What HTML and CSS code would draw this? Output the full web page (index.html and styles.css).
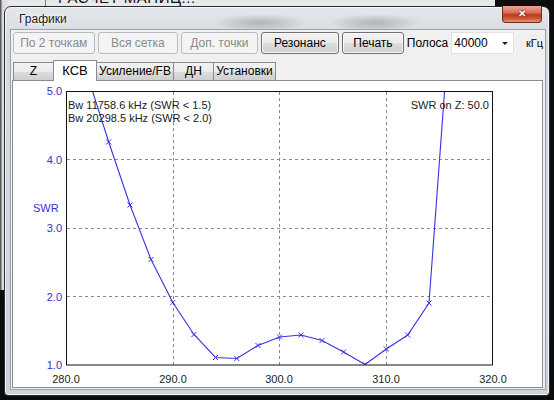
FILE: index.html
```html
<!DOCTYPE html>
<html lang="ru">
<head>
<meta charset="utf-8">
<title>Графики</title>
<link rel="stylesheet" href="styles.css">
</head>
<body>
<div class="desktop">
  <div class="bgwin">
    <span class="bgwin-cell"></span>
    <span class="bgwin-title">РАСЧЕТ МАНИЦ...</span>
  </div>

  <div class="window">
    <div class="titlebar">
      <span class="title">Графики</span>
      <span class="close">✕</span>
    </div>
    <div class="client">
      <div class="toolbar">
        <button class="btn w1" disabled>По 2 точкам</button>
        <button class="btn w2" disabled>Вся сетка</button>
        <button class="btn w3" disabled>Доп. точки</button>
        <button class="btn w4">Резонанс</button>
        <button class="btn w5">Печать</button>
        <span class="label">Полоса</span>
        <span class="combo"><span class="combo-val">40000</span><span class="combo-arrow"></span></span>
        <span class="unit">кГц</span>
      </div>
      <div class="tabs">
        <span class="tab t1">Z</span>
        <span class="tab t2 active">КСВ</span>
        <span class="tab t3">Усиление/FB</span>
        <span class="tab t4">ДН</span>
        <span class="tab t5">Установки</span>
      </div>
      <div class="panel">
        <svg class="chart" viewBox="12 79 530 309" width="530" height="309" xmlns="http://www.w3.org/2000/svg">
          <defs>
            <clipPath id="plotclip"><rect x="65" y="89" width="427" height="274"/></clipPath>
          </defs>
          <g class="grid">
            <line x1="172.5" y1="90" x2="172.5" y2="363"/>
            <line x1="278.5" y1="90" x2="278.5" y2="363"/>
            <line x1="385.5" y1="90" x2="385.5" y2="363"/>
            <line x1="66" y1="157.5" x2="492" y2="157.5"/>
            <line x1="66" y1="226.5" x2="492" y2="226.5"/>
            <line x1="66" y1="294.5" x2="492" y2="294.5"/>
          </g>
          <g clip-path="url(#plotclip)">
            <polyline class="curve" points="86.4,73 107.7,140 129,203 150,257.5 171.8,300.5 193,332.5 214.5,355.5 235.8,356.5 257,343.5 278.5,335 299.9,333 321,338.5 342.6,350 364,362.5 385.3,347 406.7,333 428,301 449.4,10"/>
            <path class="marks" d="M105.2,137.5l5,5m0,-5l-5,5 M126.5,200.5l5,5m0,-5l-5,5 M147.5,255l5,5m0,-5l-5,5 M169.3,298l5,5m0,-5l-5,5 M190.5,330l5,5m0,-5l-5,5 M212,353l5,5m0,-5l-5,5 M233.3,354l5,5m0,-5l-5,5 M254.5,341l5,5m0,-5l-5,5 M276,332.5l5,5m0,-5l-5,5 M297.4,330.5l5,5m0,-5l-5,5 M318.5,336l5,5m0,-5l-5,5 M340.1,347.5l5,5m0,-5l-5,5 M361.5,360l5,5m0,-5l-5,5 M382.8,344.5l5,5m0,-5l-5,5 M404.2,330.5l5,5m0,-5l-5,5 M425.5,298.5l5,5m0,-5l-5,5"/>
          </g>
          <rect class="frame" x="65.5" y="89.5" width="426" height="273.5"/>
          <g class="ylab">
            <text x="61" y="93">5.0</text>
            <text x="61" y="161.5">4.0</text>
            <text x="61" y="230">3.0</text>
            <text x="61" y="298.5">2.0</text>
            <text x="61" y="367">1.0</text>
          </g>
          <text class="yname" x="32" y="209.5">SWR</text>
          <g class="xlab">
            <text x="65" y="381">280.0</text>
            <text x="172" y="381">290.0</text>
            <text x="278" y="381">300.0</text>
            <text x="385" y="381">310.0</text>
            <text x="492" y="381">320.0</text>
          </g>
          <text class="info" x="67" y="107">Bw 11758.6 kHz (SWR &lt; 1.5)</text>
          <text class="info" x="67" y="119.5">Bw 20298.5 kHz (SWR &lt; 2.0)</text>
          <text class="info end" x="488" y="107">SWR on Z: 50.0</text>
        </svg>
      </div>
    </div>
  </div>
</div>
</body>
</html>
```

FILE: styles.css
```css
html, body {
  margin: 0;
  padding: 0;
}
body {
  width: 554px;
  height: 400px;
  overflow: hidden;
  background: #0c0c0c;
  font-family: "Liberation Sans", Arial, sans-serif;
}
.desktop {
  position: relative;
  width: 554px;
  height: 400px;
  overflow: hidden;
}
.bgwin {
  position: absolute;
  left: -10px;
  top: -20px;
  width: 505px;
  height: 310px;
  background: linear-gradient(90deg, #5a5a5a 0px, #5a5a5a 11px, #d9d9d9 12px, #e9e9e9 20px);
}
.bgwin-cell {
  position: absolute;
  left: 55px;
  top: 0;
  width: 1px;
  height: 40px;
  background: #7a7a7a;
}
.bgwin-title {
  position: absolute;
  left: 68px;
  top: 9px;
  font-size: 15px;
  color: #111;
  letter-spacing: 0.5px;
}
.window {
  position: absolute;
  left: 4px;
  top: 6px;
  width: 546px;
  height: 390px;
  box-sizing: border-box;
  border: 1px solid #2a2e33;
  border-radius: 7px 7px 4px 4px;
  background:
    radial-gradient(ellipse 48px 9px at 255px 16px, rgba(120,126,134,0.45), rgba(120,126,134,0) 100%),
    radial-gradient(ellipse 46px 9px at 370px 16px, rgba(120,126,134,0.45), rgba(120,126,134,0) 100%),
    linear-gradient(180deg, #e4e7ea 0%, #d6dbe0 8%, #cdd3d9 100%);
  box-shadow: inset 0 0 0 1px rgba(255,255,255,0.7);
  padding: 0 3px 5px 5px;
  display: flex;
  flex-direction: column;
}
.titlebar {
  position: relative;
  height: 22px;
  flex: none;
}
.title {
  position: absolute;
  left: 9px;
  top: 5px;
  font-size: 12px;
  color: #1c1c1c;
  text-shadow: 0 0 6px #fff, 0 0 3px #fff;
}
.close {
  position: absolute;
  right: 4px;
  top: -1px;
  width: 40px;
  height: 17px;
  box-sizing: border-box;
  border: 1px solid #6a2a20;
  border-top: none;
  border-radius: 0 0 4px 4px;
  background: linear-gradient(180deg, #e9a593 0%, #d8735d 40%, #c23a1f 55%, #cc5a3c 80%, #e39b7c 100%);
  color: #fff;
  font-size: 10px;
  font-weight: bold;
  line-height: 16px;
  text-align: center;
  text-shadow: 0 0 2px #5a1a10, 0 0 1px #5a1a10;
}
.client {
  flex: 1;
  background: #f0f0f0;
  border: 1px solid #9aa3ad;
  display: flex;
  flex-direction: column;
  padding: 2px 2px 1px 1px;
  min-height: 0;
}
.toolbar {
  display: flex;
  align-items: center;
  height: 22px;
  padding-left: 1px;
  flex: none;
}
.btn {
  height: 22px;
  box-sizing: border-box;
  margin-right: 3px;
  padding: 0;
  font-family: "Liberation Sans", Arial, sans-serif;
  font-size: 12px;
  color: #000;
  border: 1px solid #707070;
  border-radius: 3px;
  background: linear-gradient(180deg, #f2f2f2 0%, #ebebeb 50%, #dddddd 51%, #cfcfcf 100%);
  box-shadow: inset 0 0 0 1px rgba(255,255,255,0.8);
}
.btn:disabled {
  color: #8a8a8a;
  border-color: #b7bbbf;
  background: #f4f4f4;
  box-shadow: none;
}
.w1 { width: 82px; }
.w2 { width: 81px; }
.w3 { width: 77px; }
.w4 { width: 79px; }
.w5 { width: 62px; margin-right: 3px; }
.label {
  font-size: 12px;
  color: #000;
  margin-right: 3px;
}
.combo {
  position: relative;
  width: 63px;
  height: 22px;
  box-sizing: border-box;
  background: #fff;
  border: 1px solid #e2e2e2;
  display: flex;
  align-items: center;
}
.combo-val {
  font-size: 12px;
  padding-left: 2px;
  color: #000;
}
.combo-arrow {
  position: absolute;
  right: 5px;
  top: 9px;
  border-left: 3px solid transparent;
  border-right: 3px solid transparent;
  border-top: 3px solid #222;
}
.unit {
  font-size: 11px;
  margin-left: 12px;
  color: #000;
}
.tabs {
  display: flex;
  align-items: flex-end;
  height: 21px;
  margin-top: 5px;
  padding-left: 1px;
  flex: none;
  position: relative;
  z-index: 1;
}
.tab {
  height: 18px;
  box-sizing: border-box;
  border: 1px solid #898c95;
  border-bottom: none;
  margin-right: -1px;
  background: linear-gradient(180deg, #f2f2f2 0%, #ebebeb 50%, #dddddd 51%, #cfcfcf 100%);
  font-size: 12px;
  line-height: 17px;
  text-align: center;
  color: #000;
}
.tab.active {
  height: 21px;
  background: #fff;
  line-height: 19px;
  font-size: 13px;
  margin-bottom: -1px;
  position: relative;
  z-index: 2;
}
.t1 { width: 41px; }
.t2 { width: 44px; }
.t3 { width: 78px; }
.t4 { width: 41px; }
.t5 { width: 63px; }
.panel {
  flex: 1;
  background: #fff;
  border: 1px solid #898c95;
  min-height: 0;
  overflow: hidden;
}
.chart {
  display: block;
}
.grid line {
  stroke: #8a8a8a;
  stroke-width: 1;
  stroke-dasharray: 3 3;
}
.frame {
  fill: none;
  stroke: #111;
  stroke-width: 1;
}
.curve {
  fill: none;
  stroke: #3434e2;
  stroke-width: 1.1;
}
.marks {
  fill: none;
  stroke: #3434e2;
  stroke-width: 1;
}
.ylab text, .yname {
  font-family: "Liberation Sans", Arial, sans-serif;
  font-size: 11px;
  fill: #3232d2;
}
.ylab text {
  text-anchor: end;
}
.xlab text {
  font-family: "Liberation Sans", Arial, sans-serif;
  font-size: 11px;
  fill: #222;
  text-anchor: middle;
}
.info {
  font-family: "Liberation Sans", Arial, sans-serif;
  font-size: 11px;
  fill: #1a1a1a;
}
.info.end {
  text-anchor: end;
}
```
